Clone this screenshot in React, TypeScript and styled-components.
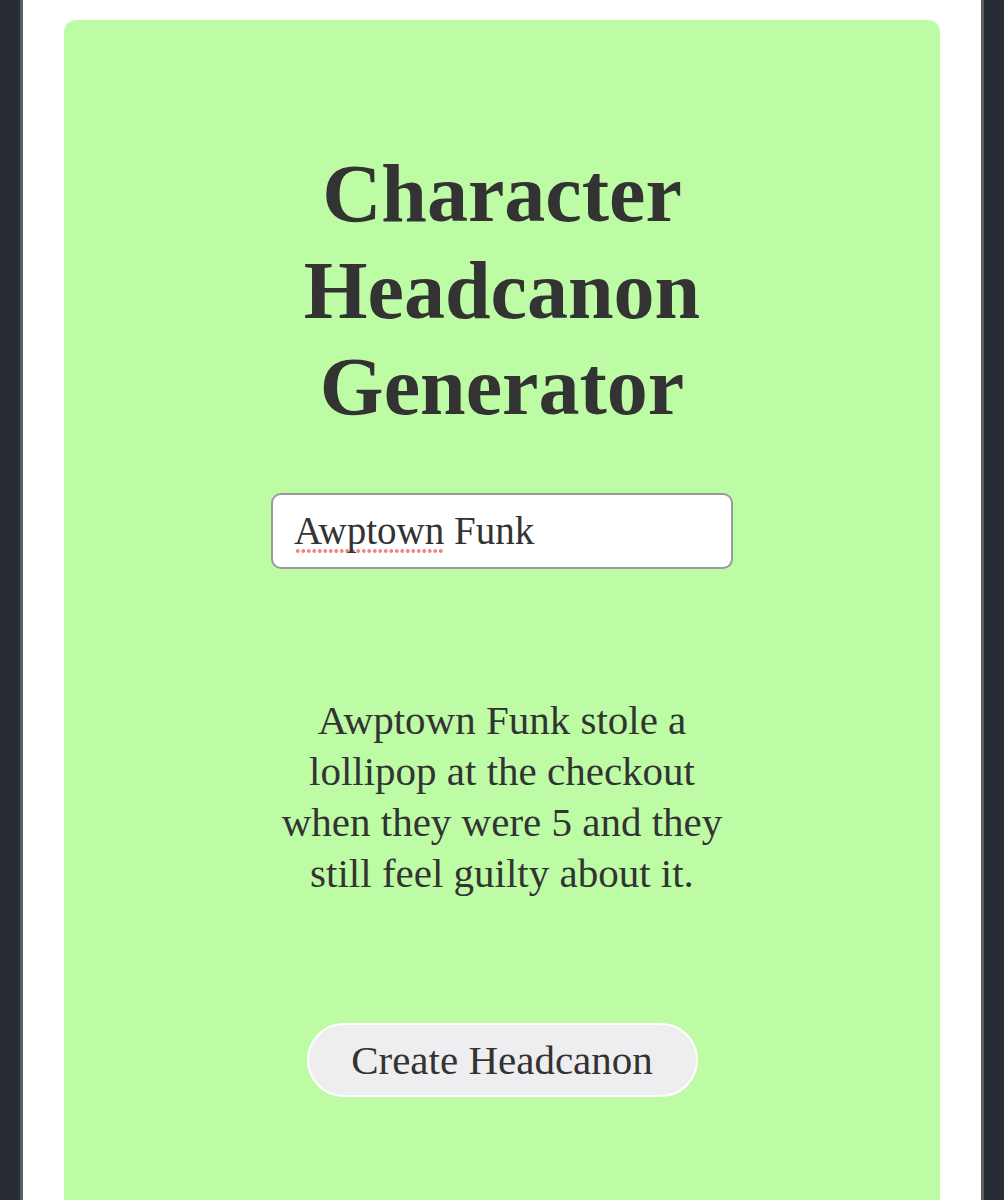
import * as React from 'react';
import styled, { createGlobalStyle } from 'styled-components';

const GlobalStyle = createGlobalStyle`
  html, body {
    margin: 0;
    padding: 0;
    background: #282c34;
  }
  body {
    font-family: "Liberation Serif", "Times New Roman", serif;
    color: #333333;
  }
`;

const Frame = styled.div`
  margin: 0 20px;
  min-height: 1200px;
  background: #ffffff;
  border-left: 3px solid #5a5d63;
  border-right: 3px solid #5a5d63;
  padding: 20px 41px 0;
  box-sizing: border-box;
`;

const Card = styled.main`
  background: #bdfca5;
  border-radius: 12px;
  padding: 126px 24px 200px;
  display: flex;
  flex-direction: column;
  align-items: center;
`;

const Title = styled.h1`
  margin: 0;
  max-width: 440px;
  font-size: 82px;
  line-height: 96.5px;
  font-weight: 700;
  text-align: center;
  color: #333333;
`;

const Field = styled.div`
  margin-top: 57px;
  width: 462px;
  height: 76px;
  box-sizing: border-box;
  border: 2px solid #9a9a9a;
  border-radius: 10px;
  background: #ffffff;
  padding: 0 21px;
  display: flex;
  align-items: center;
  font-size: 39px;
  color: #333333;
  white-space: pre;
`;

const Misspelled = styled.span`
  background-image: radial-gradient(circle, #f08585 1.8px, transparent 2.1px);
  background-size: 5.5px 4px;
  background-repeat: repeat-x;
  background-position: 1px 100%;
`;

const Result = styled.p`
  margin: 126px 0 0;
  max-width: 460px;
  font-size: 41px;
  line-height: 51px;
  text-align: center;
  color: #333333;
`;

const Button = styled.button`
  margin-top: 124px;
  width: 391px;
  height: 74px;
  box-sizing: border-box;
  border: 2px solid #ffffff;
  border-radius: 37px;
  background: #eeeef0;
  font-family: "Liberation Serif", "Times New Roman", serif;
  font-size: 41px;
  color: #333333;
  cursor: pointer;
  padding: 0;
`;

export default function App() {
  const name = 'Awptown Funk';
  return (
    <>
      <GlobalStyle />
      <Frame>
        <Card>
          <Title>Character Headcanon Generator</Title>
          <Field>
            <Misspelled>Awptown</Misspelled> Funk
          </Field>
          <Result>
            {name} stole a lollipop at the checkout when they were 5 and they still feel guilty about it.
          </Result>
          <Button>Create Headcanon</Button>
        </Card>
      </Frame>
    </>
  );
}
